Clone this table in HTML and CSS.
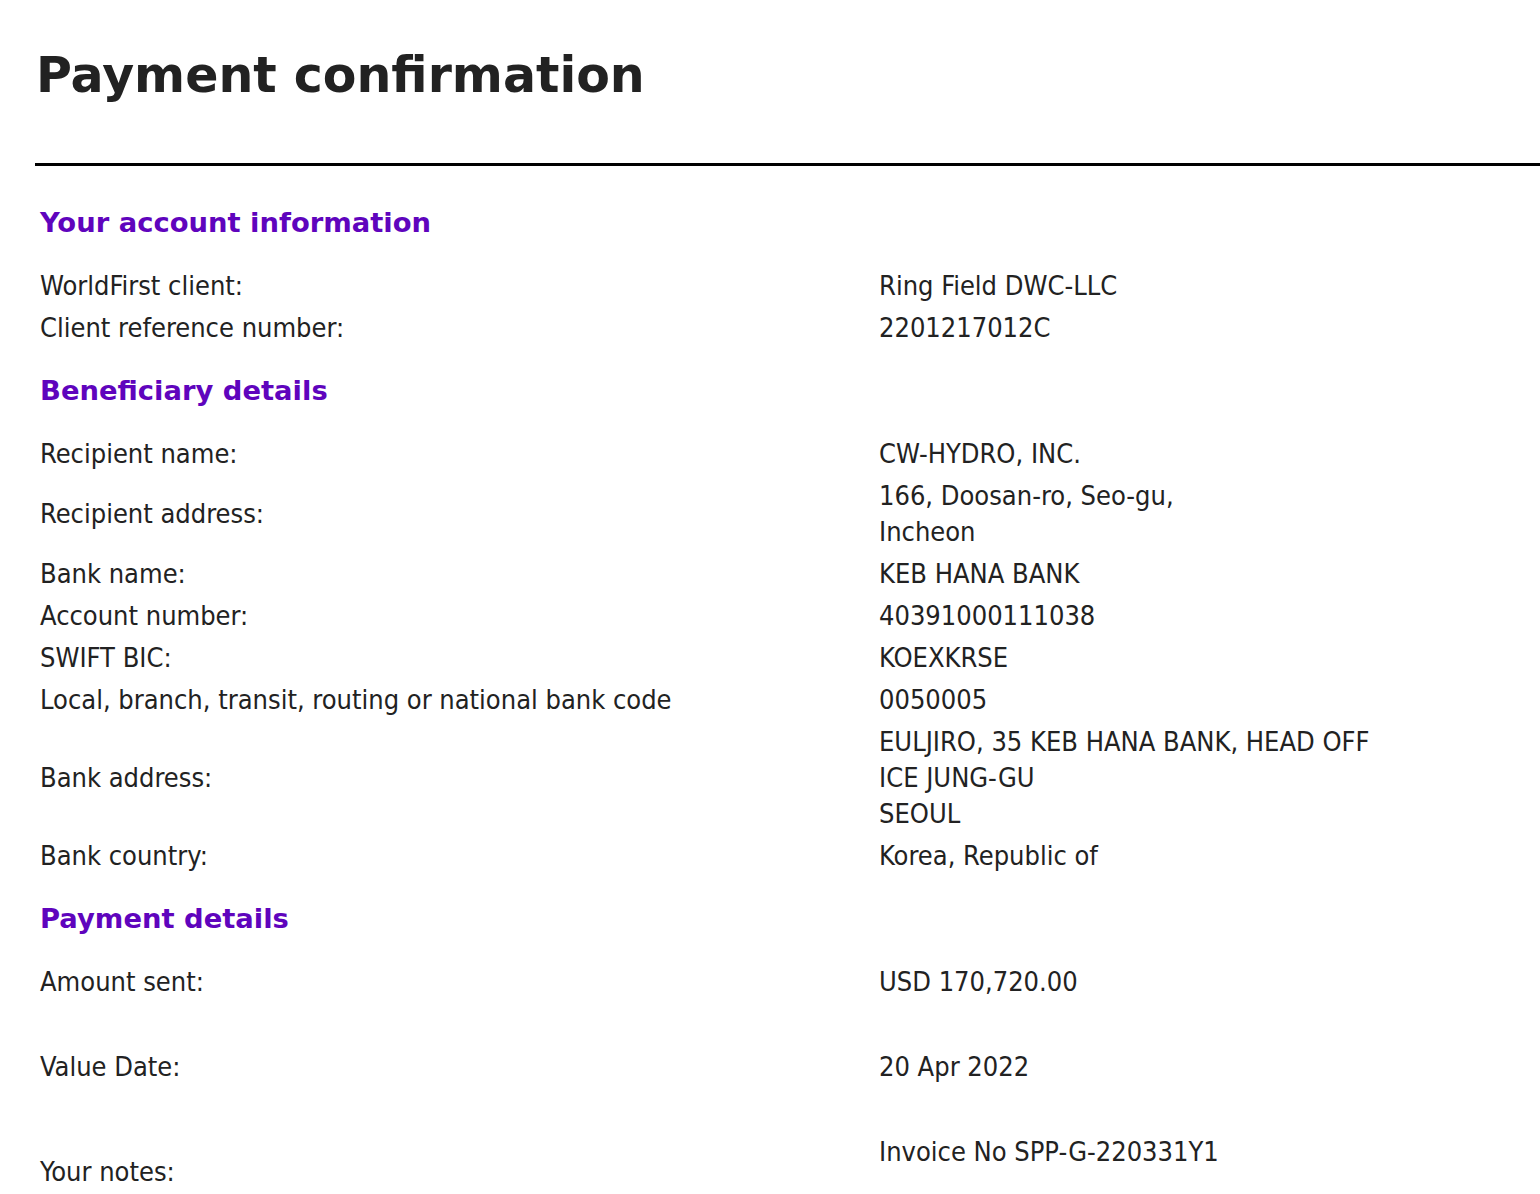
FILE: index.html
```html
<!DOCTYPE html>
<html lang="en">

<head>
    <meta charset="UTF-8">
    <meta name="viewport" content="width=device-width, initial-scale=1.0">
    <title>Payment confirmation</title>
    <link rel="stylesheet" href="styles.css">
</head>

<body>
    <div class="page">
        <h1 class="title">Payment confirmation</h1>
        <hr class="rule">

        <table class="details">
            <tr class="section">
                <th colspan="2">Your account information</th>
            </tr>
            <tr>
                <td class="label">WorldFirst client:</td>
                <td>Ring Field DWC-LLC</td>
            </tr>
            <tr>
                <td class="label">Client reference number:</td>
                <td>2201217012C</td>
            </tr>

            <tr class="section">
                <th colspan="2">Beneficiary details</th>
            </tr>
            <tr>
                <td class="label">Recipient name:</td>
                <td>CW-HYDRO, INC.</td>
            </tr>
            <tr>
                <td class="label">Recipient address:</td>
                <td>166, Doosan-ro, Seo-gu,<br>Incheon</td>
            </tr>
            <tr>
                <td class="label">Bank name:</td>
                <td>KEB HANA BANK</td>
            </tr>
            <tr>
                <td class="label">Account number:</td>
                <td>40391000111038</td>
            </tr>
            <tr>
                <td class="label">SWIFT BIC:</td>
                <td>KOEXKRSE</td>
            </tr>
            <tr>
                <td class="label">Local, branch, transit, routing or national bank code</td>
                <td>0050005</td>
            </tr>
            <tr>
                <td class="label">Bank address:</td>
                <td>EULJIRO, 35 KEB HANA BANK, HEAD OFF<br>ICE JUNG-GU<br>SEOUL</td>
            </tr>
            <tr>
                <td class="label">Bank country:</td>
                <td>Korea, Republic of</td>
            </tr>

            <tr class="section">
                <th colspan="2">Payment details</th>
            </tr>
            <tr>
                <td class="label">Amount sent:</td>
                <td>USD 170,720.00</td>
            </tr>
            <tr class="spacer">
                <td colspan="2"></td>
            </tr>
            <tr>
                <td class="label">Value Date:</td>
                <td>20 Apr 2022</td>
            </tr>
            <tr class="spacer">
                <td colspan="2"></td>
            </tr>
            <tr>
                <td class="label notes">Your notes:</td>
                <td>Invoice No SPP-G-220331Y1<br>&nbsp;</td>
            </tr>
        </table>
    </div>
</body>

</html>
```

FILE: styles.css
```css
* {
    margin: 0;
    padding: 0;
    box-sizing: border-box;
}

body {
    background: #ffffff;
    color: #222222;
    font-family: "DejaVu Sans Condensed", "DejaVu Sans", sans-serif;
    font-stretch: condensed;
    font-size: 27px;
    overflow: hidden;
}

.page {
    padding: 47px 0 0 35px;
    width: 1700px;
}

.title {
    font-family: "DejaVu Sans", sans-serif;
    font-stretch: normal;
    font-size: 49px;
    font-weight: bold;
    color: #222222;
    line-height: 57px;
    padding-left: 1px;
}

.rule {
    border: none;
    border-top: 3px solid #000000;
    margin-top: 59px;
    margin-bottom: 15px;
}

.details {
    border-collapse: collapse;
    width: 100%;
}

.details td {
    padding: 3px 5px;
    line-height: 36px;
    vertical-align: middle;
}

.details td.label {
    width: 839px;
}

.details td.notes {
    padding-top: 7px;
}

.section th {
    font-family: "DejaVu Sans", sans-serif;
    font-stretch: normal;
    font-size: 27.4px;
    font-weight: bold;
    color: #5f04bd;
    text-align: left;
    line-height: 36px;
    padding: 24px 5px;
}

.spacer td {
    height: 43px;
    padding: 0;
}
```
